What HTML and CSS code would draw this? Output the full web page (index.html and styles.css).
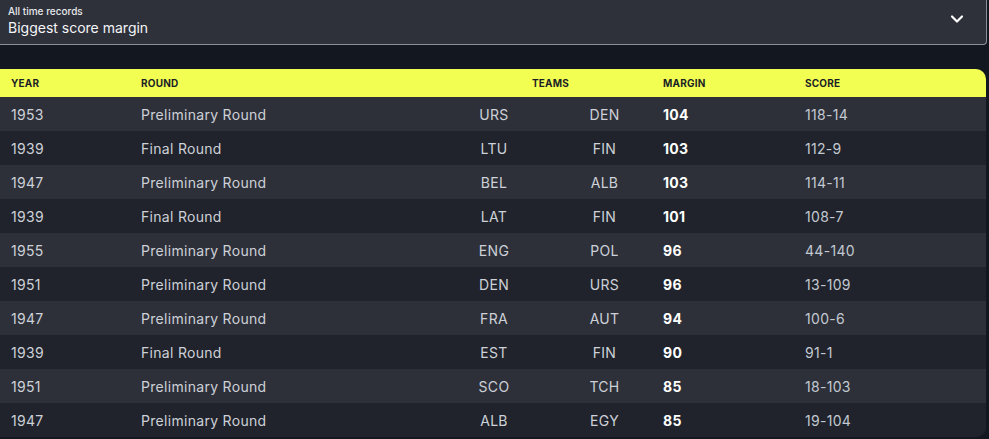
FILE: index.html
```html
<!DOCTYPE html>
<html lang="en">
<head>
<meta charset="utf-8">
<title>All time records</title>
<link rel="stylesheet" href="styles.css">
</head>
<body>
<div class="page">
  <div class="select">
    <div class="select-text">
      <div class="select-label">All time records</div>
      <div class="select-value">Biggest score margin</div>
    </div>
    <svg class="chevron" width="14" height="10" viewBox="0 0 14 10"><path d="M2 2.5 L7 7.5 L12 2.5" fill="none" stroke="#ffffff" stroke-width="2.2" stroke-linecap="round" stroke-linejoin="round"/></svg>
  </div>

  <div class="table">
    <div class="row head">
      <div>Year</div>
      <div>Round</div>
      <div class="teams-head">Teams</div>
      <div>Margin</div>
      <div>Score</div>
    </div>
    <div class="row"><div>1953</div><div>Preliminary Round</div><div class="team">URS</div><div class="team away">DEN</div><div class="margin">104</div><div class="score">118-14</div></div>
    <div class="row"><div>1939</div><div>Final Round</div><div class="team">LTU</div><div class="team away">FIN</div><div class="margin">103</div><div class="score">112-9</div></div>
    <div class="row"><div>1947</div><div>Preliminary Round</div><div class="team">BEL</div><div class="team away">ALB</div><div class="margin">103</div><div class="score">114-11</div></div>
    <div class="row"><div>1939</div><div>Final Round</div><div class="team">LAT</div><div class="team away">FIN</div><div class="margin">101</div><div class="score">108-7</div></div>
    <div class="row"><div>1955</div><div>Preliminary Round</div><div class="team">ENG</div><div class="team away">POL</div><div class="margin">96</div><div class="score">44-140</div></div>
    <div class="row"><div>1951</div><div>Preliminary Round</div><div class="team">DEN</div><div class="team away">URS</div><div class="margin">96</div><div class="score">13-109</div></div>
    <div class="row"><div>1947</div><div>Preliminary Round</div><div class="team">FRA</div><div class="team away">AUT</div><div class="margin">94</div><div class="score">100-6</div></div>
    <div class="row"><div>1939</div><div>Final Round</div><div class="team">EST</div><div class="team away">FIN</div><div class="margin">90</div><div class="score">91-1</div></div>
    <div class="row"><div>1951</div><div>Preliminary Round</div><div class="team">SCO</div><div class="team away">TCH</div><div class="margin">85</div><div class="score">18-103</div></div>
    <div class="row"><div>1947</div><div>Preliminary Round</div><div class="team">ALB</div><div class="team away">EGY</div><div class="margin">85</div><div class="score">19-104</div></div>
  </div>
</div>
</body>
</html>
```
FILE: styles.css
```css
html, body {
  margin: 0;
  padding: 0;
  background: #121720;
  font-family: Inter, "Noto Sans", "Liberation Sans", sans-serif;
  overflow: hidden;
}

.page {
  width: 987px;
  display: flex;
  flex-direction: column;
  gap: 24px;
}

.select {
  margin: -8px 0 0 -1px;
  height: 44px;
  padding: 8px 22px 0 8px;
  background: #2e313a;
  border: 1px solid #8c8f96;
  border-top: 0;
  border-radius: 0 0 4px 0;
  display: flex;
  align-items: center;
  justify-content: space-between;
  box-sizing: content-box;
}

.select-text {
  display: flex;
  flex-direction: column;
  gap: 2px;
  margin-top: -3px;
}

.select-label {
  font-size: 10px;
  font-weight: 500;
  color: #e6e8ec;
  line-height: 12px;
}

.select-value {
  font-size: 14px;
  color: #f4f5f7;
  line-height: 18px;
}

.chevron {
  margin-top: -6px;
}

.table {
  width: 986px;
  border-radius: 0 10px 10px 0;
  overflow: hidden;
  background: #20232b;
}

.row {
  display: grid;
  grid-template-columns: 130px 297px 112px 113px 142px 1fr;
  align-items: center;
  height: 34px;
  padding-left: 11px;
  font-size: 14px;
  letter-spacing: 0.3px;
  color: #cdd1d8;
}

.row:nth-child(even) {
  background: #2d3038;
}

.row:nth-child(odd) {
  background: #20232b;
}

.row.head {
  height: 28px;
  background: #f2ff52;
  color: #1b1e26;
  font-size: 10px;
  font-weight: 700;
  text-transform: uppercase;
  letter-spacing: 0.2px;
}

.teams-head {
  grid-column: span 2;
  text-align: center;
}

.team {
  text-align: center;
}

.team.away {
  padding-right: 4px;
}

.margin {
  font-weight: 700;
  color: #ffffff;
}

.score {
  color: #c3c9d2;
}
```
